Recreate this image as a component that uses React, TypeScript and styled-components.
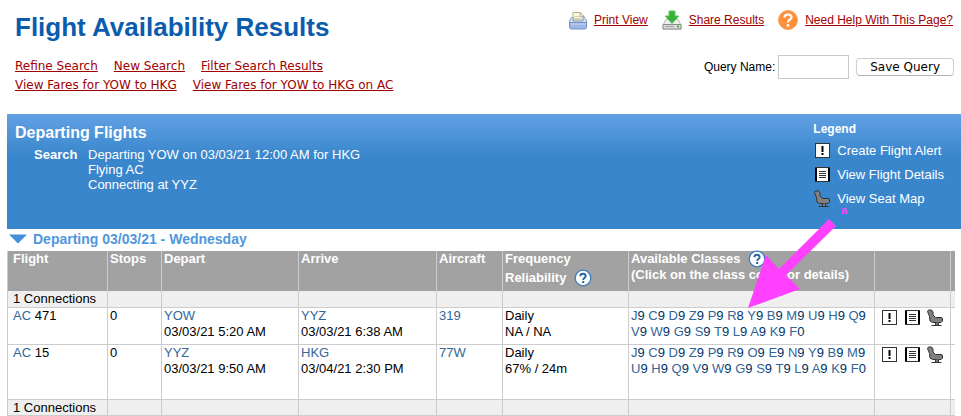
import React from "react";
import styled, { createGlobalStyle } from "styled-components";

const GlobalStyle = createGlobalStyle`
  * { box-sizing: border-box; }
  body {
    margin: 0;
    background: #fff;
    color: #000;
    font: 13px/16px "Liberation Sans", Arial, sans-serif;
  }
`;

const Page = styled.main`
  padding: 0 0 0 7px;
`;

const Header = styled.header`
  display: flex;
  justify-content: space-between;
  height: 114px;
  padding: 10px 7px 0 8px;
`;

const Title = styled.h1`
  margin: 0 0 13px;
  font-size: 26px;
  line-height: 34px;
  color: #0b5cad;
`;

const LinkRow = styled.nav`
  display: flex;
  gap: 16px;
  font: 12px/19px "DejaVu Sans", Verdana, sans-serif;
`;

const RedLink = styled.a`
  color: #a00000;
  text-decoration: underline;
  white-space: nowrap;
`;

const HeaderSide = styled.div`
  display: flex;
  flex-direction: column;
  align-items: flex-end;
`;

const Tools = styled.nav`
  display: flex;
  gap: 14px;
  padding-right: 1px;
  font-size: 12px;
  line-height: 20px;
`;

const Tool = styled.div`
  display: flex;
  align-items: center;
  gap: 7px;
`;

const QueryForm = styled.form`
  display: flex;
  align-items: center;
  margin-top: 25px;
  font-size: 12px;
`;

const QueryInput = styled.input`
  width: 71px;
  height: 24px;
  margin: 0 7px 0 3px;
  border: 1px solid #c8c8c8;
  background: #fff;
`;

const SaveButton = styled.button`
  height: 18px;
  padding: 0 13px;
  border: 1px solid #cfcfcf;
  border-bottom-color: #b4b4b4;
  border-radius: 4px;
  background: #fff;
  color: #000;
  font: 12px/16px "DejaVu Sans", Verdana, sans-serif;
`;

const Banner = styled.section`
  display: flex;
  justify-content: space-between;
  height: 115px;
  padding: 7px 17px 0 8px;
  color: #fff;
  background: linear-gradient(#61a1e3, #3a86cc 42px);
`;

const BannerTitle = styled.h2`
  margin: 0 0 3px;
  font-size: 16px;
  line-height: 23px;
`;

const Criteria = styled.dl`
  display: grid;
  grid-template-columns: 54px auto;
  margin: 0 0 0 19px;
  line-height: 15px;
  dt { font-weight: bold; }
  dd { margin: 0; }
`;

const LegendList = styled.ul`
  margin: 0;
  padding: 0;
  list-style: none;
`;

const LegendTitle = styled.h3`
  margin: 0 0 2px;
  font-size: 12px;
  line-height: 16px;
`;

const LegendItem = styled.li`
  display: flex;
  align-items: center;
  gap: 5px;
  height: 24px;
  padding-left: 1px;
`;

const DayHeading = styled.h2`
  display: flex;
  align-items: center;
  gap: 6px;
  margin: 0 0 2px;
  padding-left: 2px;
  font-size: 14px;
  line-height: 20px;
  color: #4f97dd;
`;

const TableArea = styled.div`
  position: relative;
  margin-right: 6px;
`;

const Table = styled.table`
  width: 100%;
  table-layout: fixed;
  border-collapse: collapse;
`;

const Col = styled.col<{ $w?: number }>`
  width: ${(p) => (p.$w ? `${p.$w}px` : "auto")};
`;

const HeadCell = styled.th`
  height: 40px;
  padding: 0 0 0 2px;
  border-left: 1px solid #cccccc;
  background: #a2a2a2;
  color: #fff;
  text-align: left;
  vertical-align: top;
  white-space: nowrap;
  &:first-child { padding-left: 5px; }
`;

const HeadLine = styled.div<{ $tall?: boolean }>`
  display: flex;
  align-items: center;
  gap: 8px;
  height: ${(p) => (p.$tall ? "22px" : "16px")};
`;

const Cell = styled.td`
  padding: 0 0 0 2px;
  border-left: 1px solid #cccccc;
  border-bottom: 1px solid #cccccc;
  vertical-align: top;
  white-space: nowrap;
  &:first-child { padding-left: 5px; }
`;

const ConnectionRow = styled.tr`
  height: 16px;
  background: #efefef;
  line-height: 15px;
`;

const FlightRow = styled.tr<{ $h: number }>`
  height: ${(p) => p.$h}px;
`;

const BlueLink = styled.a`
  color: #336699;
  text-decoration: none;
`;

const ClassLink = styled(BlueLink)`
  b {
    font-weight: normal;
    color: #003366;
  }
`;

const Actions = styled.div`
  display: flex;
  gap: 5px;
  padding: 1px 0 0 4px;
`;

const IconButton = styled.button`
  display: flex;
  padding: 0;
  border: 0;
  background: none;
`;

const Arrow = styled.svg`
  position: absolute;
  right: 104px;
  top: -51px;
  width: 106px;
  height: 110px;
  pointer-events: none;
  overflow: visible;
  font: bold 11px/11px "Liberation Sans", Arial, sans-serif;
`;

const PrintIcon = () => (
  <svg width="18" height="19" viewBox="0 0 18 19">
    <path d="M4 9V1.5h7.5L15 5v4z" fill="#fbf6dc" stroke="#b9ae84" />
    <path d="M11 1.5V5.5H15" fill="#e6e6da" stroke="#a7b0b8" />
    <path d="M5.500 5.500h5M5.500 7.500h7" stroke="#d6cfa9" />
    <path d="M2.500 6.500h1.500V10h10V6.500h1.500L17.500 10v4H.5v-4z" fill="#dbe6f5" stroke="#7f9ccb" />
    <path d="M.5 11.500h17V16q0 2-2 2h-13q-2 0-2-2z" fill="#9fb9e4" stroke="#7391c6" />
    <path d="M2 13h14" stroke="#c9d8f1" />
  </svg>
);

const ShareIcon = () => (
  <svg width="20" height="20" viewBox="0 0 20 20">
    <path d="M4 9.500h12l3 5.500v4H1v-4z" fill="#ededed" stroke="#b8b8b8" />
    <path d="M1 14.500h18v4.500H1z" fill="#dcdcdc" stroke="#8c8c8c" />
    <path d="M3 16.500h9" stroke="#a0a0a0" />
    <rect x="15" y="15.500" width="2" height="2" fill="#29c529" />
    <path d="M7 1h6v5h4l-7 7.500L3 6h4z" fill="#38b138" stroke="#62c95c" />
  </svg>
);

const HelpIcon = () => (
  <svg width="20" height="20" viewBox="0 0 20 20">
    <circle cx="10" cy="10" r="9.500" fill="#ff8f3a" stroke="#f7a25f" />
    <path d="M6.500 7.500Q6.500 4.500 10 4.500T13.500 7.500C13.500 9.500 10 9.500 10 12.500" fill="none" stroke="#fff" strokeWidth="2.200" />
    <circle cx="10" cy="15.500" r="1.400" fill="#fff" />
  </svg>
);

const InfoIcon = () => (
  <svg width="18" height="18" viewBox="0 0 18 18">
    <circle cx="9" cy="9" r="7.800" fill="#fff" stroke="#3c7eb9" strokeWidth="1.300" />
    <path d="M6.300 7.200Q6.300 4.700 9 4.700T11.700 7.200C11.700 8.800 9.200 8.700 9.200 11" fill="none" stroke="#2667a5" strokeWidth="1.900" />
    <rect x="8.200" y="12" width="2" height="2" fill="#2667a5" />
  </svg>
);

const AlertIcon = () => (
  <svg width="18" height="18" viewBox="0 0 18 18">
    <rect x="1.500" y="1.500" width="14" height="14" fill="#fff" stroke="#333" />
    <path d="M8.500 4V10M8.500 11v2" stroke="#000" strokeWidth="2" />
  </svg>
);

const DetailsIcon = () => (
  <svg width="18" height="18" viewBox="0 0 18 18">
    <rect x="1" y="1" width="15" height="15" fill="#fff" />
    <path d="M2 1v15M15 1v15" stroke="#000" strokeWidth="2" />
    <path d="M1 1.500h15M1 15.500h15" stroke="#333" />
    <path d="M5 5.500h7M5 7.500h7M5 9.500h7M5 11.500h7" stroke="#333" />
  </svg>
);

const SeatIcon = () => (
  <svg width="18" height="18" viewBox="0 0 18 18">
    <path d="M.5 2.500L1.500 1H4.500L6 3V6L8.500 8.500H14Q15.500 8.500 15.500 10V12L14 13.500H5.500L3 12 2.500 7.500z" fill="#808080" stroke="#333" />
    <path d="M9 13.500h3V16H9z" fill="#777" />
    <path d="M4.500 16.500h10M8.500 14v2M11.500 14v2" stroke="#333" />
  </svg>
);

const QuestionHelp = ({ label }: { label: string }) => (
  <IconButton type="button" aria-label={label}><InfoIcon /></IconButton>
);

const Classes = ({ codes }: { codes: string }) => (
  <>
    {codes.split(" ").map((code, i) => (
      <React.Fragment key={code}>
        {i > 0 && " "}
        <ClassLink href="#">{code[0]}<b>{code[1]}</b></ClassLink>
      </React.Fragment>
    ))}
  </>
);

const flights = [
  {
    number: "471", stops: 0, from: "YOW", departs: "03/03/21 5:20 AM", to: "YYZ", arrives: "03/03/21 6:38 AM",
    aircraft: "319", reliability: "NA / NA", height: 37,
    classes: ["J9 C9 D9 Z9 P9 R8 Y9 B9 M9 U9 H9 Q9", "V9 W9 G9 S9 T9 L9 A9 K9 F0"],
  },
  {
    number: "15", stops: 0, from: "YYZ", departs: "03/03/21 9:50 AM", to: "HKG", arrives: "03/04/21 2:30 PM",
    aircraft: "77W", reliability: "67% / 24m", height: 55,
    classes: ["J9 C9 D9 Z9 P9 R9 O9 E9 N9 Y9 B9 M9", "U9 H9 Q9 V9 W9 G9 S9 T9 L9 A9 K9 F0"],
  },
];

const Connections = () => (
  <ConnectionRow>
    <Cell>1 Connections</Cell>
    {Array.from({ length: 8 }, (_, i) => <Cell key={i} />)}
  </ConnectionRow>
);

export default function App() {
  return (
    <>
      <GlobalStyle />
      <Page>
        <Header>
          <div>
            <Title>Flight Availability Results</Title>
            <LinkRow>
              <RedLink href="#">Refine Search</RedLink>
              <RedLink href="#">New Search</RedLink>
              <RedLink href="#">Filter Search Results</RedLink>
            </LinkRow>
            <LinkRow>
              <RedLink href="#">View Fares for YOW to HKG</RedLink>
              <RedLink href="#">View Fares for YOW to HKG on AC</RedLink>
            </LinkRow>
          </div>
          <HeaderSide>
            <Tools>
              <Tool><PrintIcon /><RedLink href="#">Print View</RedLink></Tool>
              <Tool><ShareIcon /><RedLink href="#">Share Results</RedLink></Tool>
              <Tool><HelpIcon /><RedLink href="#">Need Help With This Page?</RedLink></Tool>
            </Tools>
            <QueryForm>
              <label htmlFor="query">Query Name:</label>
              <QueryInput id="query" />
              <SaveButton type="button">Save Query</SaveButton>
            </QueryForm>
          </HeaderSide>
        </Header>
        <Banner>
          <div>
            <BannerTitle>Departing Flights</BannerTitle>
            <Criteria>
              <dt>Search</dt>
              <dd>Departing YOW on 03/03/21 12:00 AM for HKG<br />Flying AC<br />Connecting at YYZ</dd>
            </Criteria>
          </div>
          <div>
            <LegendTitle>Legend</LegendTitle>
            <LegendList>
              <LegendItem><AlertIcon />Create Flight Alert</LegendItem>
              <LegendItem><DetailsIcon />View Flight Details</LegendItem>
              <LegendItem><SeatIcon />View Seat Map</LegendItem>
            </LegendList>
          </div>
        </Banner>
        <DayHeading>
          <svg width="18" height="10" viewBox="0 0 18 10"><path d="M0 .5h18L9 9.500z" fill="#4390d8" /></svg>
          Departing 03/03/21 - Wednesday
        </DayHeading>
        <TableArea>
          <Table>
            <colgroup>
              <Col $w={100} /><Col $w={54} /><Col $w={137} /><Col $w={138} /><Col $w={66} />
              <Col $w={126} /><Col /><Col $w={76} /><Col $w={5} />
            </colgroup>
            <thead>
              <tr>
                <HeadCell>Flight</HeadCell>
                <HeadCell>Stops</HeadCell>
                <HeadCell>Depart</HeadCell>
                <HeadCell>Arrive</HeadCell>
                <HeadCell>Aircraft</HeadCell>
                <HeadCell>
                  <HeadLine>Frequency</HeadLine>
                  <HeadLine $tall>Reliability <QuestionHelp label="About reliability" /></HeadLine>
                </HeadCell>
                <HeadCell>
                  <HeadLine>Available Classes <QuestionHelp label="About classes" /></HeadLine>
                  <HeadLine>(Click on the class code for details)</HeadLine>
                </HeadCell>
                <HeadCell />
                <HeadCell />
              </tr>
            </thead>
            <tbody>
              <Connections />
              {flights.map((f) => (
                <FlightRow key={f.number} $h={f.height}>
                  <Cell><BlueLink href="#">AC</BlueLink> {f.number}</Cell>
                  <Cell>{f.stops}</Cell>
                  <Cell><BlueLink href="#">{f.from}</BlueLink><br />{f.departs}</Cell>
                  <Cell><BlueLink href="#">{f.to}</BlueLink><br />{f.arrives}</Cell>
                  <Cell><BlueLink href="#">{f.aircraft}</BlueLink></Cell>
                  <Cell>Daily<br />{f.reliability}</Cell>
                  <Cell><Classes codes={f.classes[0]} /><br /><Classes codes={f.classes[1]} /></Cell>
                  <Cell>
                    <Actions>
                      <IconButton type="button" aria-label="Create Flight Alert"><AlertIcon /></IconButton>
                      <IconButton type="button" aria-label="View Flight Details"><DetailsIcon /></IconButton>
                      <IconButton type="button" aria-label="View Seat Map"><SeatIcon /></IconButton>
                    </Actions>
                  </Cell>
                  <Cell />
                </FlightRow>
              ))}
              <Connections />
            </tbody>
          </Table>
          <Arrow viewBox="0 0 106 110">
            <path d="M3 108L21 55l13 14L84 19l7 7-50 49 14 14z" fill="#ff40ff" />
            <text x="96" y="14" fill="#ff40ff">a</text>
          </Arrow>
        </TableArea>
      </Page>
    </>
  );
}
